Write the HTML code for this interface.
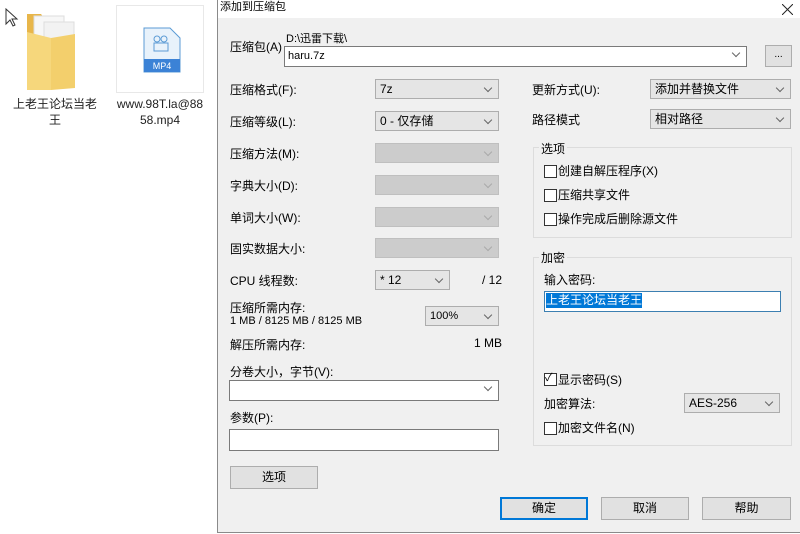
<!DOCTYPE html>
<html><head><meta charset="utf-8"><style>
body{margin:0;width:800px;height:534px;background:#fff;position:relative;overflow:hidden;font-family:"Liberation Sans","Noto Sans CJK SC",sans-serif;font-size:12px;color:#000}
.a{position:absolute;white-space:nowrap}
.cb{position:absolute;background:#e5e5e5;border:1px solid #adadad;box-sizing:border-box;height:20px;padding-left:4px;line-height:18px}
.cb.d{background:#cccccc;border-color:#bfbfbf}
.cb::after{content:"";position:absolute;right:7px;top:5px;width:5px;height:5px;border-right:1px solid #666;border-bottom:1px solid #666;transform:rotate(45deg)}
.cb.d::after{border-color:#aaa}
.in{position:absolute;background:#fff;border:1px solid #7a7a7a;box-sizing:border-box}
.btn{position:absolute;background:#e1e1e1;border:1px solid #adadad;box-sizing:border-box;text-align:center;line-height:21px}
.chk{position:absolute;width:11px;height:11px;border:1px solid #333;background:#fff}
.grp{position:absolute;border:1px solid #dcdcdc;box-sizing:border-box}
.leg{position:absolute;background:#f0f0f0;padding:0 2px}
</style></head><body>
<!-- desktop -->
<svg class="a" style="left:5px;top:8px" width="14" height="20"><path d="M1 1v15l4-4 3 6 2-1-3-6h5z" fill="#fff" stroke="#333"/></svg>
<svg class="a" style="left:24px;top:12px" width="54" height="80"><path d="M3 2h14l3 4h10v70H3z" fill="#e8b64a"/><rect x="10" y="4" width="30" height="68" fill="#f7f7f7" stroke="#ddd"/><rect x="20" y="10" width="30" height="64" fill="#f2f2f2" stroke="#ddd"/><path d="M3 20l24 6v52H3z" fill="#f6d77c"/><path d="M27 26l24-4v54l-24 2z" fill="#f3cf6c"/></svg>
<div class="a" style="left:10px;top:96px;width:90px;text-align:center;line-height:16px;color:#222">上老王论坛当老<br>王</div>
<div class="a" style="left:116px;top:5px;width:88px;height:88px;border:1px solid #e8e8e8;box-sizing:border-box"></div>
<svg class="a" style="left:143px;top:27px" width="38" height="46"><path d="M1 1h26l10 10v34H1z" fill="#e8f2fb" stroke="#5b9bd5"/><rect x="1" y="32" width="36" height="13" fill="#3b82d6"/><text x="19" y="42" font-size="9" fill="#fff" text-anchor="middle" font-family="Liberation Sans">MP4</text><circle cx="14" cy="12" r="3" fill="none" stroke="#5b9bd5"/><circle cx="21" cy="12" r="3" fill="none" stroke="#5b9bd5"/><rect x="11" y="16" width="14" height="8" fill="none" stroke="#5b9bd5"/></svg>
<div class="a" style="left:112px;top:96px;width:96px;text-align:center;line-height:16px;color:#222">www.98T.la@88<br>58.mp4</div>
<!-- dialog -->
<div class="a" style="left:217px;top:0;width:583px;height:533px;background:#f0f0f0;border-left:1px solid #8a8a8a;border-bottom:1px solid #8a8a8a;box-sizing:border-box"></div>
<div class="a" style="left:218px;top:0;width:582px;height:18px;background:#fff"></div>
<div class="a" style="left:220px;top:0px;line-height:14px;font-size:11px">添加到压缩包</div>
<svg class="a" style="left:782px;top:4px" width="11" height="11"><path d="M0 0L11 11M11 0L0 11" stroke="#222" stroke-width="1"/></svg>

<div class="a" style="left:230px;top:38px">压缩包(A)</div>
<div class="a" style="left:286px;top:30px;font-size:11px">D:\迅雷下载\</div>
<div class="in" style="left:284px;top:46px;width:463px;height:21px;padding-left:3px;line-height:18px;font-size:11px">haru.7z</div>
<div class="a" style="left:733px;top:50px;width:5px;height:5px;border-right:1px solid #666;border-bottom:1px solid #666;transform:rotate(45deg)"></div>
<div class="btn" style="left:765px;top:45px;width:27px;height:22px;line-height:18px;font-size:10px">...</div>

<div class="a" style="left:230px;top:81px">压缩格式(F):</div>
<div class="a" style="left:230px;top:113px">压缩等级(L):</div>
<div class="a" style="left:230px;top:145px">压缩方法(M):</div>
<div class="a" style="left:230px;top:177px">字典大小(D):</div>
<div class="a" style="left:230px;top:209px">单词大小(W):</div>
<div class="a" style="left:230px;top:240px">固实数据大小:</div>
<div class="a" style="left:230px;top:272px">CPU 线程数:</div>
<div class="a" style="left:230px;top:299px">压缩所需内存:</div>
<div class="a" style="left:230px;top:315px;font-size:11px">1 MB / 8125 MB / 8125 MB</div>
<div class="a" style="left:230px;top:336px">解压所需内存:</div>
<div class="a" style="left:474px;top:336px">1 MB</div>
<div class="a" style="left:230px;top:363px">分卷大小，字节(V):</div>
<div class="a" style="left:230px;top:409px">参数(P):</div>

<div class="cb" style="left:375px;top:79px;width:124px">7z</div>
<div class="cb" style="left:375px;top:111px;width:124px">0 - 仅存储</div>
<div class="cb d" style="left:375px;top:143px;width:124px"></div>
<div class="cb d" style="left:375px;top:175px;width:124px"></div>
<div class="cb d" style="left:375px;top:207px;width:124px"></div>
<div class="cb d" style="left:375px;top:238px;width:124px"></div>
<div class="cb" style="left:375px;top:270px;width:75px">* 12</div>
<div class="a" style="left:482px;top:273px">/ 12</div>
<div class="cb" style="left:425px;top:306px;width:74px;font-size:11px">100%</div>
<div class="in" style="left:229px;top:380px;width:270px;height:21px"></div>
<div class="a" style="left:485px;top:384px;width:5px;height:5px;border-right:1px solid #666;border-bottom:1px solid #666;transform:rotate(45deg)"></div>
<div class="in" style="left:229px;top:429px;width:270px;height:22px"></div>
<div class="btn" style="left:230px;top:466px;width:88px;height:23px">选项</div>

<div class="a" style="left:532px;top:81px">更新方式(U):</div>
<div class="a" style="left:532px;top:111px">路径模式</div>
<div class="cb" style="left:650px;top:79px;width:141px">添加并替换文件</div>
<div class="cb" style="left:650px;top:109px;width:141px">相对路径</div>

<div class="grp" style="left:533px;top:147px;width:259px;height:91px"></div>
<div class="leg" style="left:539px;top:140px">选项</div>
<div class="chk" style="left:544px;top:165px"></div><div class="a" style="left:558px;top:162px">创建自解压程序(X)</div>
<div class="chk" style="left:544px;top:189px"></div><div class="a" style="left:558px;top:186px">压缩共享文件</div>
<div class="chk" style="left:544px;top:213px"></div><div class="a" style="left:558px;top:210px">操作完成后删除源文件</div>

<div class="grp" style="left:533px;top:257px;width:259px;height:189px"></div>
<div class="leg" style="left:539px;top:249px">加密</div>
<div class="a" style="left:544px;top:271px">输入密码:</div>
<div class="in" style="left:544px;top:291px;width:237px;height:21px;border-color:#3c7fb1"></div>
<div class="a" style="left:546px;top:293px;background:#0078d7;color:#fff;line-height:15px">上老王论坛当老王</div>
<div class="chk" style="left:544px;top:373px"></div><div class="a" style="left:545px;top:369px;font-size:11px">✓</div><div class="a" style="left:558px;top:371px">显示密码(S)</div>
<div class="a" style="left:544px;top:395px">加密算法:</div>
<div class="cb" style="left:684px;top:393px;width:96px">AES-256</div>
<div class="chk" style="left:544px;top:422px"></div><div class="a" style="left:558px;top:419px">加密文件名(N)</div>

<div class="btn" style="left:500px;top:497px;width:88px;height:23px;border:2px solid #0078d7;line-height:19px">确定</div>
<div class="btn" style="left:601px;top:497px;width:88px;height:23px">取消</div>
<div class="btn" style="left:702px;top:497px;width:89px;height:23px">帮助</div>
</body></html>
